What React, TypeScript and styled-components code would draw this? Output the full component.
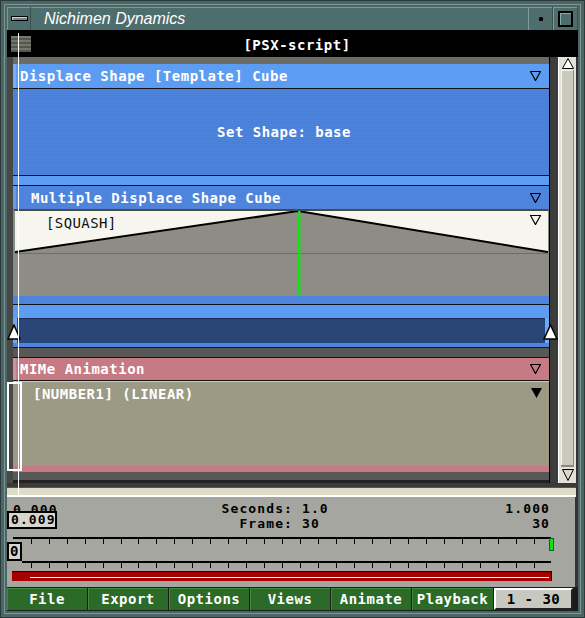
import React from "react";
import styled, { createGlobalStyle, css } from "styled-components";

const GlobalStyle = createGlobalStyle`
  html, body { margin: 0; padding: 0; background: #4c6666; }
  body { width: 585px; height: 618px; overflow: hidden; }
  *, *::before, *::after { box-sizing: border-box; }
`;

const MONO = `"DejaVu Sans Mono", "Liberation Mono", monospace`;

const monoText = css`
  font-family: ${MONO};
  font-weight: bold;
  font-size: 14px;
  line-height: 16px;
  letter-spacing: 0.5px;
  white-space: pre;
`;

const readoutText = css`
  font-family: ${MONO};
  font-weight: bold;
  font-size: 13px;
  line-height: 15px;
  letter-spacing: 1.1px;
  white-space: pre;
`;

const C = {
  frame: "#4c6666",
  title: "#4e6d6d",
  lightBlue: "#5c9cf2",
  blue: "#4f84dc",
  navy: "#2a4578",
  pink: "#c67a84",
  darkGray: "#585856",
  olive: "#9c9a84",
  line: "#141414",
  timeline: "#a6a6a0",
  green: "#2c6a2a",
};

const Window = styled.div`
  position: relative;
  width: 585px;
  height: 618px;
  padding: 6px;
  border: 1px solid #2b3a3a;
  background: ${C.frame};
  box-shadow: inset 0 0 0 3px ${C.frame}, inset 0 0 0 4px #7d9696;
  display: flex;
  flex-direction: column;
`;

/* ---------- title bar ---------- */
const TitleBar = styled.div`
  height: 23px;
  flex: none;
  display: flex;
  background: ${C.title};
  box-shadow: inset 0 1px 0 #7e9a9a;
`;

const TitleButton = styled.div<{ $w: number }>`
  width: ${(p) => p.$w}px;
  flex: none;
  display: flex;
  align-items: center;
  justify-content: center;
  border-left: 1px solid #7e9a9a;
  border-right: 1px solid #3a5252;
`;

const MenuBarGlyph = styled.div`
  width: 17px;
  height: 5px;
  border: 1px solid #000;
  background: #6f8888;
  box-shadow: inset 1px 1px 0 #c8d8d8;
`;

const DotGlyph = styled.div`
  width: 4px;
  height: 4px;
  background: #000;
  border-radius: 1px;
`;

const MaxGlyph = styled.div`
  width: 15px;
  height: 16px;
  border: 2px solid #000;
  box-shadow: inset 1px 1px 0 #8fa8a8;
`;

const TitleText = styled.div`
  flex: 1;
  padding-left: 13px;
  color: #fff;
  font-family: "Liberation Sans", Arial, sans-serif;
  font-style: italic;
  font-size: 16px;
  line-height: 23px;
`;

/* ---------- script bar ---------- */
const ScriptBar = styled.div`
  height: 27px;
  flex: none;
  background: #000;
  display: flex;
  align-items: center;
  padding-left: 4px;
`;

const ScriptIcon = styled.div`
  width: 20px;
  height: 16px;
  background: repeating-linear-gradient(180deg, #76766c 0 2px, #55554e 2px 4px);
`;

const ScriptTitle = styled.div`
  flex: 1;
  text-align: center;
  margin-right: 15px;
  padding-top: 3px;
  color: #fff;
  ${monoText}
`;

/* ---------- main row ---------- */
const MainRow = styled.div`
  position: relative;
  height: 426px;
  flex: none;
  display: flex;
`;

const Gutter = styled.div<{ $w: number; $bg: string }>`
  width: ${(p) => p.$w}px;
  flex: none;
  background: ${(p) => p.$bg};
`;

const Panel = styled.div`
  width: 537px;
  flex: none;
  border-right: 1px solid #000;
  display: flex;
  flex-direction: column;
  background: #000;
`;

const Band = styled.div<{ $h: number; $bg: string }>`
  height: ${(p) => p.$h}px;
  flex: none;
  background: ${(p) => p.$bg};
`;

const SectionHeader = styled.div<{ $bg: string; $h: number; $indent: number }>`
  height: ${(p) => p.$h}px;
  flex: none;
  background: ${(p) => p.$bg};
  display: flex;
  align-items: center;
  justify-content: space-between;
  padding: 0 8px 0 ${(p) => p.$indent}px;
  color: #fff;
  box-shadow: inset 3px 0 0 rgba(255, 255, 255, 0.18);
  ${monoText}
`;

const ShapeBody = styled.div`
  height: 86px;
  flex: none;
  background: ${C.blue};
  background-image: repeating-linear-gradient(180deg, rgba(0, 0, 0, 0.05) 0 1px, transparent 1px 2px);
  display: flex;
  align-items: center;
  justify-content: center;
  padding-left: 6px;
  color: #fff;
  ${monoText}
`;

const GraphBox = styled.div`
  position: relative;
  height: 87px;
  flex: none;
  border-top: 2px solid #4a4a48;
  border-left: 2px solid #8a8a86;
  border-right: 1px solid #8a8a86;
  background: #8d8d85;
`;

const GraphDrawing = styled.svg`
  position: absolute;
  left: 0;
  top: 0;
  display: block;
`;

const GraphHead = styled.div`
  position: relative;
  display: flex;
  justify-content: space-between;
  align-items: flex-start;
  padding: 4px 7px 0 31px;
`;

const GraphLabel = styled.span`
  font-family: ${MONO};
  font-size: 14px;
  line-height: 16px;
  letter-spacing: 0.4px;
  color: #111;
`;

const SliderTrack = styled.div`
  height: 25px;
  flex: none;
  display: flex;
  padding: 0 4px;
  background: #6aa8f8;
`;

const SliderFill = styled.div`
  flex: 1;
  background: ${C.navy};
  border-top: 1px solid #1c2e52;
`;

const TrackBody = styled.div`
  height: 85px;
  flex: none;
  background: ${C.olive};
  border-top: 1px solid #cfcdb8;
  display: flex;
  justify-content: space-between;
  align-items: flex-start;
  padding: 4px 7px 0 20px;
  color: #fff;
  ${monoText}
`;

const FilledTri = styled.svg`
  margin-top: 2px;
  display: block;
`;

const Marker = styled.svg<{ $side: "left" | "right" }>`
  position: absolute;
  top: 267px;
  left: ${(p) => (p.$side === "left" ? "0px" : "536px")};
  display: block;
`;

/* ---------- vertical scrollbar ---------- */
const VScroll = styled.div`
  width: 18px;
  flex: none;
  display: flex;
  flex-direction: column;
  background: #e2e2d6;
  border-left: 1px solid #fff;
`;

const ScrollArrow = styled.div<{ $h: number }>`
  height: ${(p) => p.$h}px;
  flex: none;
  display: flex;
  align-items: center;
  justify-content: center;
`;

const ScrollThumb = styled.div`
  flex: 1;
  margin: 0 2px 0 2px;
  background: #c9c9bd;
  border-right: 1px solid #8a8a80;
  border-bottom: 2px solid #8a8a80;
  box-shadow: inset 1px 1px 0 #f4f4ec;
`;

/* ---------- horizontal scrollbar ---------- */
const HScrollRow = styled.div`
  height: 10px;
  flex: none;
  display: flex;
  background: #333;
`;

const HScroll = styled.div`
  width: 569px;
  flex: none;
  background: #dcdcc8;
  border-top: 1px solid #555;
  border-bottom: 2px solid #fff;
`;

/* ---------- timeline ---------- */
const Timeline = styled.div`
  height: 90px;
  flex: none;
  display: flex;
  flex-direction: column;
  background: ${C.timeline};
  border-right: 3px solid #333;
`;

const Readout = styled.div`
  height: 33px;
  flex: none;
  display: grid;
  grid-template-columns: 50px 236px 1fr 80px;
  padding-right: 25px;
  color: #000;
  ${readoutText}
`;

const ReadoutLeft = styled.div`
  display: flex;
  flex-direction: column;
`;

const ClippedValue = styled.div`
  height: 14px;
  overflow: hidden;
  padding: 5px 0 0 6px;
  line-height: 15px;
`;

const ValueBox = styled.div`
  height: 18px;
  border: 2px solid #000;
  background: #d6d6ce;
  line-height: 14px;
  padding-left: 2px;
`;

const ReadoutCol = styled.div<{ $align: "left" | "right" }>`
  padding-top: 4px;
  display: flex;
  flex-direction: column;
  align-items: ${(p) => (p.$align === "left" ? "flex-start" : "flex-end")};
`;

const ValueCol = styled(ReadoutCol)`
  padding-left: 9px;
`;

const Scale = styled.div`
  position: relative;
  height: 41px;
  flex: none;
`;

const ZeroBox = styled.div`
  position: absolute;
  left: 0;
  top: 12px;
  width: 15px;
  height: 19px;
  border: 2px solid #000;
  background: #d6d6ce;
  color: #000;
  ${monoText}
  line-height: 15px;
  padding-left: 1px;
  letter-spacing: 0;
`;

const Playhead = styled.div`
  position: absolute;
  left: 542px;
  top: 8px;
  width: 5px;
  height: 13px;
  background: #10e010;
  border: 1px solid #063;
`;

const RedRow = styled.div`
  height: 16px;
  flex: none;
  padding: 0 0 0 5px;
`;

const RedBar = styled.div`
  width: 540px;
  height: 10px;
  border-top: 1px solid #300;
  border-right: 1px solid #300;
  background: linear-gradient(#fff, #fff) no-repeat 18px 5px / calc(100% - 20px) 1px, #a40000;
`;

/* ---------- menu bar ---------- */
const MenuBar = styled.div`
  height: 24px;
  flex: none;
  display: flex;
  gap: 1px;
  padding: 1px 0;
  background: #1c1c1c;
`;

const MenuButton = styled.div<{ $w: number }>`
  width: ${(p) => p.$w}px;
  flex: none;
  background: ${C.green};
  box-shadow: inset 1px 1px 0 #3f8a3c;
  color: #fff;
  text-align: center;
  padding-top: 3px;
  ${monoText}
`;

const RangeBox = styled.div`
  width: 79px;
  flex: none;
  background: #c8c8c0;
  border: 2px solid;
  border-color: #fff #222 #222 #fff;
  color: #000;
  text-align: center;
  padding-top: 1px;
  ${monoText}
`;

/* ---------- overlays ---------- */
const CursorLine = styled.div`
  position: absolute;
  left: 17px;
  top: 32px;
  width: 1px;
  height: 464px;
  background: #fff;
`;

const SelectFrame = styled.div`
  position: absolute;
  left: 6px;
  top: 381px;
  width: 15px;
  height: 89px;
  border: 2px solid #fff;
`;

/* ---------- icons ---------- */
const Tri = () => (
  <svg width="11" height="10" viewBox="0 0 11 10" style={{ display: "block" }}>
    <polygon points="0.5,0.5 10.5,0.5 5.5,9.5" fill="none" stroke="#000" strokeWidth="1.2" />
  </svg>
);

const TICKS = Array.from({ length: 29 }, (_, i) => 23.7 + i * 17.96);

export default function App() {
  return (
    <>
      <GlobalStyle />
      <Window>
        <TitleBar>
          <TitleButton $w={24}>
            <MenuBarGlyph />
          </TitleButton>
          <TitleText>Nichimen Dynamics</TitleText>
          <TitleButton $w={25}>
            <DotGlyph />
          </TitleButton>
          <TitleButton $w={25}>
            <MaxGlyph />
          </TitleButton>
        </TitleBar>

        <ScriptBar>
          <ScriptIcon />
          <ScriptTitle>[PSX-script]</ScriptTitle>
        </ScriptBar>

        <MainRow>
          <Gutter $w={6} $bg="#484846" />
          <Panel>
            <Band $h={7} $bg="#6c6c66" />
            <SectionHeader $bg={C.lightBlue} $h={24} $indent={7}>
              <span>Displace Shape [Template] Cube</span>
              <Tri />
            </SectionHeader>
            <Band $h={1} $bg={C.line} />
            <ShapeBody>Set Shape: base</ShapeBody>
            <Band $h={1} $bg={C.line} />
            <Band $h={9} $bg={C.lightBlue} />
            <Band $h={1} $bg={C.line} />
            <SectionHeader $bg={C.blue} $h={23} $indent={18}>
              <span>Multiple Displace Shape Cube</span>
              <Tri />
            </SectionHeader>
            <GraphBox>
              <GraphDrawing width="533" height="85" viewBox="0 0 533 85">
                <polygon points="0,0 533,0 533,41 283,0 0,41" fill="#f6f6ef" />
                <line x1="0" y1="42.5" x2="533" y2="42.5" stroke="#6e6e68" strokeWidth="1" />
                <polyline points="0,41 283,0 533,41" fill="none" stroke="#000" strokeWidth="2" />
                <rect x="283" y="0" width="2.5" height="85" fill="#18e018" />
              </GraphDrawing>
              <GraphHead>
                <GraphLabel>[SQUASH]</GraphLabel>
                <Tri />
              </GraphHead>
            </GraphBox>
            <Band $h={8} $bg={C.blue} />
            <Band $h={1} $bg={C.line} />
            <Band $h={13} $bg={C.lightBlue} />
            <SliderTrack>
              <SliderFill />
            </SliderTrack>
            <Band $h={4} $bg={C.blue} />
            <Band $h={1} $bg={C.line} />
            <Band $h={9} $bg={C.darkGray} />
            <Band $h={1} $bg={C.line} />
            <SectionHeader $bg={C.pink} $h={22} $indent={7}>
              <span>MIMe Animation</span>
              <Tri />
            </SectionHeader>
            <Band $h={1} $bg={C.line} />
            <TrackBody>
              <span>[NUMBER1] (LINEAR)</span>
              <FilledTri width="11" height="10" viewBox="0 0 11 10">
                <polygon points="0,0 11,0 5.5,10" fill="#000" />
              </FilledTri>
            </TrackBody>
            <Band $h={6} $bg={C.pink} />
            <Band $h={8} $bg={C.darkGray} />
            <Band $h={3} $bg="#222" />
          </Panel>
          <Gutter $w={8} $bg="#3c3c3a" />
          <VScroll>
            <ScrollArrow $h={13}>
              <svg width="12" height="11" viewBox="0 0 12 11">
                <polygon points="6,0.5 11.5,10.5 0.5,10.5" fill="#fff" stroke="#000" strokeWidth="1" />
              </svg>
            </ScrollArrow>
            <ScrollThumb />
            <ScrollArrow $h={16}>
              <svg width="12" height="12" viewBox="0 0 12 12">
                <polygon points="0.5,0.5 11.5,0.5 6,11.5" fill="#d8d8cc" stroke="#000" strokeWidth="1" />
              </svg>
            </ScrollArrow>
          </VScroll>
          <Gutter $w={2} $bg="#333" />

          <Marker $side="left" width="14" height="16" viewBox="0 0 14 16">
            <polygon points="7,1 13,15 1,15" fill="#fff" stroke="#000" strokeWidth="1.5" />
          </Marker>
          <Marker $side="right" width="15" height="16" viewBox="0 0 15 16">
            <polygon points="7.5,1 14,15 1,15" fill="#fff" stroke="#000" strokeWidth="1.5" />
          </Marker>
        </MainRow>

        <Band $h={4} $bg="#3a3a38" />
        <HScrollRow>
          <HScroll />
        </HScrollRow>

        <Timeline>
          <Readout>
            <ReadoutLeft>
              <ClippedValue>0.000</ClippedValue>
              <ValueBox>0.009</ValueBox>
            </ReadoutLeft>
            <ReadoutCol $align="right">
              <span>Seconds:</span>
              <span>Frame:</span>
            </ReadoutCol>
            <ValueCol $align="left">
              <span>1.0</span>
              <span>30</span>
            </ValueCol>
            <ReadoutCol $align="right">
              <span>1.000</span>
              <span>30</span>
            </ReadoutCol>
          </Readout>
          <Scale>
            <svg width="568" height="41" viewBox="0 0 568 41" style={{ display: "block" }}>
              <rect x="6" y="7" width="538" height="2" fill="#000" />
              {TICKS.map((x) => (
                <rect key={`a${x}`} x={Math.round(x)} y="9" width="1" height="5" fill="#000" />
              ))}
              <rect x="15" y="31" width="529" height="2" fill="#000" />
              {TICKS.map((x) => (
                <rect key={`b${x}`} x={Math.round(x)} y="33" width="1" height="5" fill="#000" />
              ))}
            </svg>
            <ZeroBox>0</ZeroBox>
            <Playhead />
          </Scale>
          <RedRow>
            <RedBar />
          </RedRow>
        </Timeline>

        <MenuBar>
          <MenuButton $w={80}>File</MenuButton>
          <MenuButton $w={80}>Export</MenuButton>
          <MenuButton $w={80}>Options</MenuButton>
          <MenuButton $w={80}>Views</MenuButton>
          <MenuButton $w={80}>Animate</MenuButton>
          <MenuButton $w={81}>Playback</MenuButton>
          <RangeBox>1 - 30</RangeBox>
        </MenuBar>

        <CursorLine />
        <SelectFrame />
      </Window>
    </>
  );
}
